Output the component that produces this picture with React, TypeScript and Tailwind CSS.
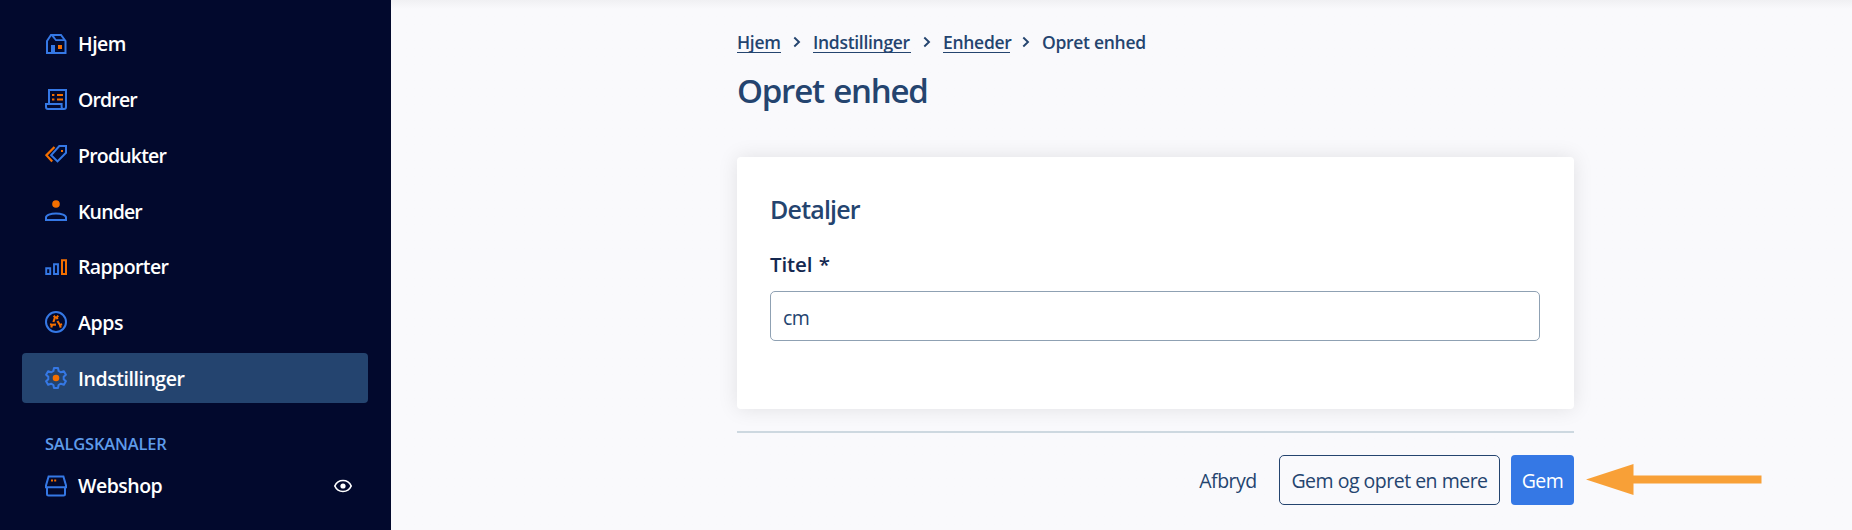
import type { ReactNode } from 'react';

interface NavItem {
  label: string;
  icon: ReactNode;
  tracking: string;
  active?: boolean;
}

interface Crumb {
  label: string;
  width: string;
}

function Icon({ children }: { children: ReactNode }) {
  return (
    <svg
      viewBox="0 0 22 22"
      className="w-[22px] h-[22px] shrink-0"
      fill="none"
      stroke="#3578e5"
      strokeWidth="2"
    >
      {children}
    </svg>
  );
}

const HomeIcon = () => (
  <Icon>
    <path d="M2 20V8l4-6h10l4.500 6v12z" />
    <path d="M7 2.400l4 4.800h9M11 7.400L7.400 2" strokeWidth="1.700" />
    <path d="M6 12h4v8H6z" fill="#3578e5" stroke="none" />
    <path d="M13 12h4v4h-4z" fill="#f46f00" stroke="none" />
  </Icon>
);

const OrdersIcon = () => (
  <Icon>
    <path d="M4 15V2h17v17a2 2 0 0 1-2 2H3a2 2 0 0 1-2-2v-3h15.600v3c0 1.200.8 2 2 2" />
    <path d="M7 7h2.400M12 7h6M7 11.500h2.400M12 11.500h6" stroke="#f46f00" />
  </Icon>
);

const ProductsIcon = () => (
  <Icon>
    <path d="M9.500 3L1.400 11.200l5.800 6.200" stroke="#f46f00" strokeWidth="2.200" />
    <path d="M14.300 2H21v6.800l-8.500 8.600-6.300-6.200z" />
    <path d="M16 6h2v2h-2z" fill="#f46f00" stroke="none" />
  </Icon>
);

const CustomersIcon = () => (
  <Icon>
    <circle cx="11" cy="4" r="3.800" fill="#f46f00" stroke="none" />
    <path d="M1 20v-2.600c0-2 4.400-4 10-4s10 2 10 4V20z" />
  </Icon>
);

const ReportsIcon = () => (
  <Icon>
    <path d="M1.200 12.200h4V18h-4zM9 8.200h4V18H9z" strokeWidth="1.900" />
    <path d="M17 4.200h4V18h-4z" stroke="#f46f00" />
  </Icon>
);

const AppsIcon = () => (
  <Icon>
    <circle cx="11" cy="11" r="10" />
    <path
      d="M8.700 4.700l1.400 1.500L8.400 11M13.200 4.700l-1.300 1.600.4 2M5 13.300l2 .5 4-.2M6.300 16.600l.6-2.300M12.400 10l2.500 3.900 2.200-.6M15.800 16.600l-.9-2.400"
      stroke="#f46f00"
      strokeWidth="2.100"
    />
  </Icon>
);

const SettingsIcon = () => (
  <Icon>
    <path
      d="M9 1h4l.6 3 2.300 1.300 3-1 2 3.400-2.200 2.100v2.400l2.200 2.100-2 3.400-3-1-2.300 1.300-.6 3H9l-.6-3-2.300-1.300-3 1-2-3.400 2.200-2.100V9.800L1.100 7.700l2-3.400 3 1L8.400 4z"
      strokeLinejoin="round"
    />
    <circle cx="11" cy="11" r="3.300" fill="#f46f00" stroke="none" />
  </Icon>
);

const WebshopIcon = () => (
  <Icon>
    <path d="M3.600 1.400h14.800L21 10.500v1.700H1v-1.700zM2 12.200V19a1.500 1.500 0 0 0 1.500 1.500h15A1.500 1.500 0 0 0 20 19v-6.800" />
    <path d="M6 4.500h2v2H6zM9.200 4.500h2v2h-2z" fill="#f46f00" stroke="none" />
  </Icon>
);

const EyeIcon = () => (
  <svg viewBox="0 0 18 14" className="w-[18px] h-[14px]" fill="none" stroke="#fff" strokeWidth="1.700">
    <path d="M.8 7C2.400 3.500 5.300 1.500 9 1.500s6.600 2 8.200 5.500c-1.600 3.500-4.500 5.500-8.200 5.500S2.400 10.500.8 7z" />
    <circle cx="9" cy="7" r="2.600" fill="#fff" stroke="none" />
  </svg>
);

const ChevronIcon = () => (
  <svg viewBox="0 0 8 12" className="w-2 h-3" fill="none" stroke="#24446f" strokeWidth="1.900">
    <path d="M1.300 1.500L6 6l-4.700 4.500" />
  </svg>
);

const navItems: NavItem[] = [
  { label: 'Hjem', icon: <HomeIcon />, tracking: 'tracking-[-0.5px]' },
  { label: 'Ordrer', icon: <OrdersIcon />, tracking: 'tracking-[-0.85px]' },
  { label: 'Produkter', icon: <ProductsIcon />, tracking: 'tracking-[-0.8px]' },
  { label: 'Kunder', icon: <CustomersIcon />, tracking: 'tracking-[-0.85px]' },
  { label: 'Rapporter', icon: <ReportsIcon />, tracking: 'tracking-[-0.6px]' },
  { label: 'Apps', icon: <AppsIcon />, tracking: 'tracking-[-0.4px]' },
  { label: 'Indstillinger', icon: <SettingsIcon />, tracking: 'tracking-[-0.45px]', active: true },
];

const crumbs: Crumb[] = [
  { label: 'Hjem', width: 'w-[44px]' },
  { label: 'Indstillinger', width: 'w-[98px]' },
  { label: 'Enheder', width: 'w-[67px]' },
];

function Sidebar() {
  return (
    <aside className="w-[391px] shrink-0 bg-[#02092d] pl-[22px] pr-[23px] pt-[18.5px] text-white">
      <nav className="flex flex-col gap-[5.75px]">
        {navItems.map((item) => (
          <a
            key={item.label}
            className={`flex h-[50px] items-center gap-[11px] rounded pl-[23px] ${item.active ? 'bg-[#24446f]' : ''}`}
          >
            {item.icon}
            <span className={`pt-px text-[19.5px] font-semibold leading-none ${item.tracking}`}>{item.label}</span>
          </a>
        ))}
      </nav>
      <h3 className="mt-[31px] h-[20px] pl-[23px] text-[16.5px] leading-[20px] text-[#5e9bea] font-semibold tracking-[-0.2px]">
        SALGSKANALER
      </h3>
      <div className="mt-[7px] flex h-[50px] items-center pl-[23px] pr-[16px]">
        <WebshopIcon />
        <span className="ml-[11px] flex-1 text-[19.5px] font-semibold leading-none tracking-[-0.5px]">Webshop</span>
        <EyeIcon />
      </div>
    </aside>
  );
}

export default function App() {
  return (
    <div className="flex h-[530px] w-[1852px] overflow-hidden bg-[#f9f9fc] font-['Open_Sans','Noto_Sans',sans-serif] text-[#24446f]">
      <Sidebar />
      <main className="flex-1 bg-linear-to-b from-[#f0f0f3] to-[#f9f9fc] to-[9px] pl-[346px]">
        <div className="w-[837px]">
          <div className="mt-[30px] flex h-[24px] items-center whitespace-nowrap text-[17.5px] font-semibold leading-[24px] tracking-[-0.3px]">
            {crumbs.map((crumb) => (
              <div key={crumb.label} className="flex items-center">
                <a className={`border-b border-[#24446f] leading-[20px] ${crumb.width}`}>{crumb.label}</a>
                <span className="flex w-8 justify-center">
                  <ChevronIcon />
                </span>
              </div>
            ))}
            <span>Opret enhed</span>
          </div>
          <h1 className="mt-[15px] h-[44px] text-[33px] font-semibold leading-[44px] tracking-[-1.2px] [word-spacing:2px]">
            Opret enhed
          </h1>

          <section className="mt-[44px] h-[252px] rounded bg-white px-[33px] pt-[35px] shadow-[0_0_20px_rgba(0,0,0,0.1)]">
            <h2 className="h-[34px] text-[25px] font-semibold leading-[34px] tracking-[-0.8px]">Detaljer</h2>
            <label className="mt-[24px] block h-[28px] text-[20.5px] font-semibold leading-[28px] tracking-[-0.1px] text-[#142850] [word-spacing:1px]">
              Titel *
            </label>
            <input
              defaultValue="cm"
              className="mt-[13px] block h-[50px] w-[770px] rounded-[5px] border border-[#8fa1b3] bg-white px-[12px] pt-[2px] text-[19.5px] tracking-[-0.5px] outline-none"
            />
          </section>

          <div className="mt-[22px] border-t-2 border-[#cdd8e0]" />
          <div className="mt-[22px] flex h-[50px] items-center justify-end whitespace-nowrap text-[19.5px] tracking-[-0.5px]">
            <button className="mr-[22px] w-[58px] pt-[2px]">Afbryd</button>
            <button className="mr-[11px] flex h-[50px] w-[221px] items-center justify-center rounded-[5px] border border-[#24446f] pt-[2px]">
              Gem og opret en mere
            </button>
            <div className="relative">
              <button className="flex h-[50px] w-[63px] items-center justify-center rounded bg-[#3578e5] pt-[2px] text-white">
                Gem
              </button>
              {/* pointer towards the save button */}
              <svg viewBox="0 0 176 32" className="absolute left-[75px] top-[9px] h-[32px] w-[176px]" fill="#f8a037">
                <path d="M0 15.500L47.500 0v11.500H175.500v8H47.500V31z" />
              </svg>
            </div>
          </div>
        </div>
      </main>
    </div>
  );
}
